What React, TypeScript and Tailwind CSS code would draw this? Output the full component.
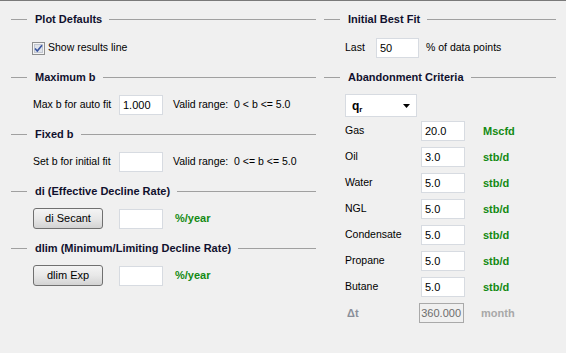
import React from 'react'

const green = 'text-[#138a13]'

function SectionHeader({ title }: { title: string }) {
  return (
    <div className="flex h-[14px] items-center">
      <span className="h-px w-4 bg-[#a0a0a0]" />
      <span className="ml-2 mr-[7px] whitespace-nowrap text-[11px] font-bold text-[#10102e]">{title}</span>
      <span className="h-px flex-1 bg-[#a0a0a0]" />
    </div>
  )
}

function TextBox({ value = '', disabled = false }: { value?: string; disabled?: boolean }) {
  return (
    <div
      className={
        disabled
          ? 'flex h-[20px] w-[45px] items-center justify-end border border-[#a9a9a9] bg-[#f0f0f0] pr-[2px] text-[11px] text-[#6d6d6d]'
          : 'flex h-[20px] w-[44px] items-center border border-[#d7dbe1] bg-white pl-[3px] text-[11px] text-black'
      }
    >
      {value}
    </div>
  )
}

function WinButton({ label }: { label: string }) {
  return (
    <button className="h-[21px] w-[70px] rounded-[3px] border border-[#707070] bg-linear-to-b from-[#f4f4f4] via-[#e8e8e8] to-[#d3d3d3] text-[11px] text-black">
      {label}
    </button>
  )
}

function CheckBox() {
  return (
    <svg width="13" height="13" viewBox="0 0 13 13">
      <rect x="0.5" y="0.5" width="12" height="12" fill="#f4f4f4" stroke="#8e8f8f" />
      <rect x="2.5" y="2.5" width="8" height="8" fill="#dfe3ea" stroke="#c2c7d0" />
      <path d="M3 6.5 L5.3 9 L10 3.2" fill="none" stroke="#3a55a0" strokeWidth="1.6" />
    </svg>
  )
}

const abandon: [string, string, string][] = [
  ['Gas', '20.0', 'Mscfd'],
  ['Oil', '3.0', 'stb/d'],
  ['Water', '5.0', 'stb/d'],
  ['NGL', '5.0', 'stb/d'],
  ['Condensate', '5.0', 'stb/d'],
  ['Propane', '5.0', 'stb/d'],
  ['Butane', '5.0', 'stb/d'],
]

export default function App() {
  return (
    <div className="h-[353px] w-[566px] overflow-hidden border-t border-[#7a7a7a] bg-[#f0f0f0] font-['Liberation_Sans',Arial,sans-serif] text-[10.5px] text-black">
      <div className="flex pt-[11px]">
        {/* Left column */}
        <div className="flex w-[316px] flex-col pl-[11px]">
          <SectionHeader title="Plot Defaults" />
          <div className="mt-[12px] flex h-[20px] items-center pl-[21px]">
            <CheckBox />
            <span className="ml-[3px]">Show results line</span>
          </div>

          <div className="mt-[12px]">
            <SectionHeader title="Maximum b" />
          </div>
          <div className="mt-[11px] flex h-[20px] items-center pl-[22px]">
            <span className="w-[86px]">Max b for auto fit</span>
            <TextBox value="1.000" />
            <span className="ml-[10px] whitespace-pre">Valid range:  0 &lt; b &lt;= 5.0</span>
          </div>

          <div className="mt-[12px]">
            <SectionHeader title="Fixed b" />
          </div>
          <div className="mt-[11px] flex h-[20px] items-center pl-[22px]">
            <span className="w-[86px]">Set b for initial fit</span>
            <TextBox />
            <span className="ml-[10px] whitespace-pre">Valid range:  0 &lt;= b &lt;= 5.0</span>
          </div>

          <div className="mt-[12px]">
            <SectionHeader title="di (Effective Decline Rate)" />
          </div>
          <div className="mt-[10px] flex h-[21px] items-center pl-[22px]">
            <WinButton label="di Secant" />
            <div className="ml-[16px]">
              <TextBox />
            </div>
            <span className={`ml-[12px] text-[11px] font-bold ${green}`}>%/year</span>
          </div>

          <div className="mt-[12px]">
            <SectionHeader title="dlim (Minimum/Limiting Decline Rate)" />
          </div>
          <div className="mt-[10px] flex h-[21px] items-center pl-[22px]">
            <WinButton label="dlim Exp" />
            <div className="ml-[16px]">
              <TextBox />
            </div>
            <span className={`ml-[12px] text-[11px] font-bold ${green}`}>%/year</span>
          </div>
        </div>

        {/* Right column */}
        <div className="flex flex-1 flex-col pl-[8px] pr-[10px]">
          <SectionHeader title="Initial Best Fit" />
          <div className="mt-[12px] flex h-[20px] items-center pl-[21px]">
            <span className="w-[31px]">Last</span>
            <div className="w-[43px]">
              <div className="flex h-[20px] w-[43px] items-center border border-[#d7dbe1] bg-white pl-[3px] text-[11px]">50</div>
            </div>
            <span className="ml-[7px]">% of data points</span>
          </div>

          <div className="mt-[12px]">
            <SectionHeader title="Abandonment Criteria" />
          </div>
          <div className="mt-[10px] pl-[21px]">
            <div className="flex h-[23px] w-[72px] items-center justify-between border border-[#d7dbe1] bg-white pl-[6px] pr-[6px]">
              <span className="text-[12px] font-bold">
                q<sub className="text-[8px]">r</sub>
              </span>
              <svg width="7" height="4" viewBox="0 0 7 4">
                <path d="M0 0h7L3.5 4z" fill="#000" />
              </svg>
            </div>
          </div>

          <div className="mt-[4px] flex flex-col gap-[6px] pl-[21px]">
            {abandon.map(([label, value, unit]) => (
              <div key={label} className="flex h-[20px] items-center">
                <span className="w-[76px]">{label}</span>
                <TextBox value={value} />
                <span className={`ml-[18px] text-[11px] font-bold ${green}`}>{unit}</span>
              </div>
            ))}
            <div className="flex h-[20px] items-center">
              <span className="w-[74px] pl-[2px] text-[11px] font-bold text-[#8a8f9a]">Δt</span>
              <TextBox value="360.000" disabled />
              <span className="ml-[17px] text-[11px] font-bold text-[#a8a8a8]">month</span>
            </div>
          </div>
        </div>
      </div>
    </div>
  )
}
